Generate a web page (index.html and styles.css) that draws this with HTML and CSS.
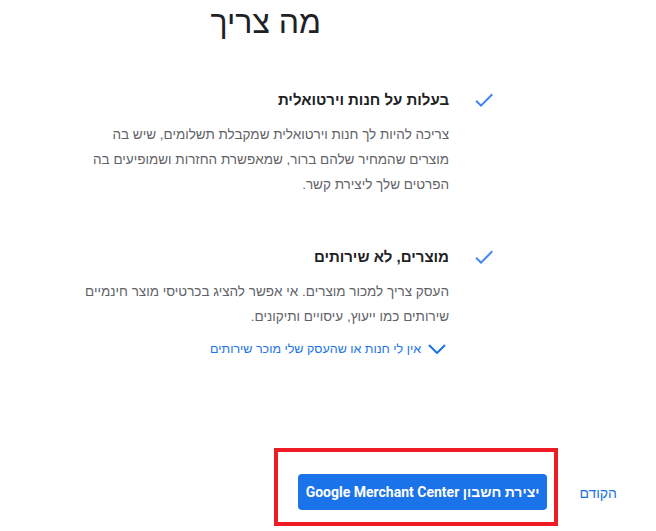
FILE: index.html
```html
<!DOCTYPE html>
<html lang="he" dir="rtl">

<head>
    <meta charset="UTF-8" />
    <title>מה צריך</title>
    <meta name="viewport" content="width=device-width, initial-scale=1.0" />
    <link rel="stylesheet" href="styles.css">
</head>

<body>
    <main class="page">
        <h1 class="page-title">מה צריך</h1>

        <section class="req">
            <svg class="req-check" viewBox="0 0 24 24" width="24" height="24">
                <path d="M9 16.17L4.83 12l-1.42 1.41L9 19 21 7l-1.41-1.41z" />
            </svg>
            <div class="req-body">
                <h2 class="req-title">בעלות על חנות וירטואלית</h2>
                <p class="req-text">צריכה להיות לך חנות וירטואלית שמקבלת תשלומים, שיש בה<br>מוצרים שהמחיר שלהם ברור, שמאפשרת החזרות ושמופיעים בה הפרטים שלך ליצירת קשר.</p>
            </div>
        </section>

        <section class="req req-second">
            <svg class="req-check" viewBox="0 0 24 24" width="24" height="24">
                <path d="M9 16.17L4.83 12l-1.42 1.41L9 19 21 7l-1.41-1.41z" />
            </svg>
            <div class="req-body">
                <h2 class="req-title">מוצרים, לא שירותים</h2>
                <p class="req-text">העסק צריך למכור מוצרים. אי אפשר להציג בכרטיסי מוצר חינמיים שירותים כמו ייעוץ, עיסויים ותיקונים.</p>
                <a class="more-link" href="#">
                    <svg viewBox="0 0 18 10" width="18" height="10">
                        <polyline points="1,1 9,9 17,1" />
                    </svg>
                    <span>אין לי חנות או שהעסק שלי מוכר שירותים</span>
                </a>
            </div>
        </section>

        <footer class="actions">
            <a class="back-link" href="#">הקודם</a>
            <span class="highlight">
                <button class="primary-btn">יצירת חשבון Google Merchant Center</button>
            </span>
        </footer>
    </main>
</body>

</html>
```

FILE: styles.css
```css
* {
    box-sizing: border-box;
}

body {
    margin: 0;
    font-family: 'Liberation Sans', Arial, sans-serif;
    background: #fff;
    color: #202124;
}

.page {
    padding-top: 2px;
}

.page-title {
    margin: 0 335px 0 0;
    font-size: 32px;
    font-weight: 400;
    line-height: 40px;
}

.req {
    display: flex;
    gap: 23px;
    padding-right: 160px;
    margin-top: 46px;
}

.req-second {
    margin-top: 48px;
}

.req-check {
    flex: none;
    fill: #4285f4;
}

.req-body {
    width: 368px;
}

.req-title {
    margin: 0;
    font-size: 15px;
    font-weight: 700;
    line-height: 24px;
}

.req-text {
    margin: 10px 0 0;
    font-size: 13.5px;
    line-height: 25px;
    color: #5f6368;
}

.more-link {
    display: inline-flex;
    align-items: center;
    gap: 7px;
    margin-top: 10px;
    margin-right: 3px;
    font-size: 12.5px;
    line-height: 20px;
    color: #1a73e8;
    text-decoration: none;
}

.more-link svg {
    fill: none;
    stroke: #1a73e8;
    stroke-width: 2;
}

.actions {
    display: flex;
    align-items: center;
    gap: 21px;
    padding-right: 39px;
    margin-top: 89px;
}

.back-link {
    margin-top: 12px;
    font-size: 14px;
    color: #1a73e8;
    text-decoration: none;
}

.highlight {
    display: inline-block;
    border: 4px solid #ed1c24;
    padding: 22px 7px 12px 20px;
}

.primary-btn {
    display: block;
    height: 36px;
    padding: 0 8px;
    border: none;
    border-radius: 4px;
    background: #1a73e8;
    color: #fff;
    font-family: Roboto, 'Liberation Sans', Arial, sans-serif;
    font-size: 14px;
    font-weight: 700;
    cursor: pointer;
}
```
